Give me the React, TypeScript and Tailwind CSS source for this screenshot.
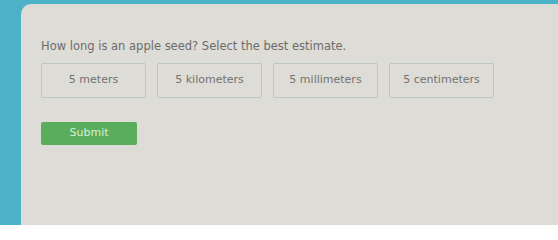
const options = ["5 meters", "5 kilometers", "5 millimeters", "5 centimeters"];

export default function App() {
  return (
    <div className="w-[558px] h-[225px] overflow-hidden bg-[#4db2c7] pl-[21px] pt-[4px]">
      <div
        className="h-full rounded-tl-[10px] bg-[#dddcd6] pl-[20px] pt-[35px] text-[#6c6c6c]"
        style={{ fontFamily: '"DejaVu Sans", Verdana, sans-serif' }}
      >
        <p className="text-[11.5px] leading-[14px]">
          How long is an apple seed? Select the best estimate.
        </p>
        <div className="mt-[10px] flex gap-[11px]">
          {options.map((o) => (
            <div
              key={o}
              className="flex h-[35px] w-[105px] items-center justify-center rounded-[2px] border border-[#bcc6c4] text-[11px] text-[#727272]"
            >
              {o}
            </div>
          ))}
        </div>
        <button className="mt-[24px] h-[23px] w-[96px] rounded-[2px] bg-[#5aad5c] text-[11px] text-[#d9efd5]">
          Submit
        </button>
      </div>
    </div>
  );
}
